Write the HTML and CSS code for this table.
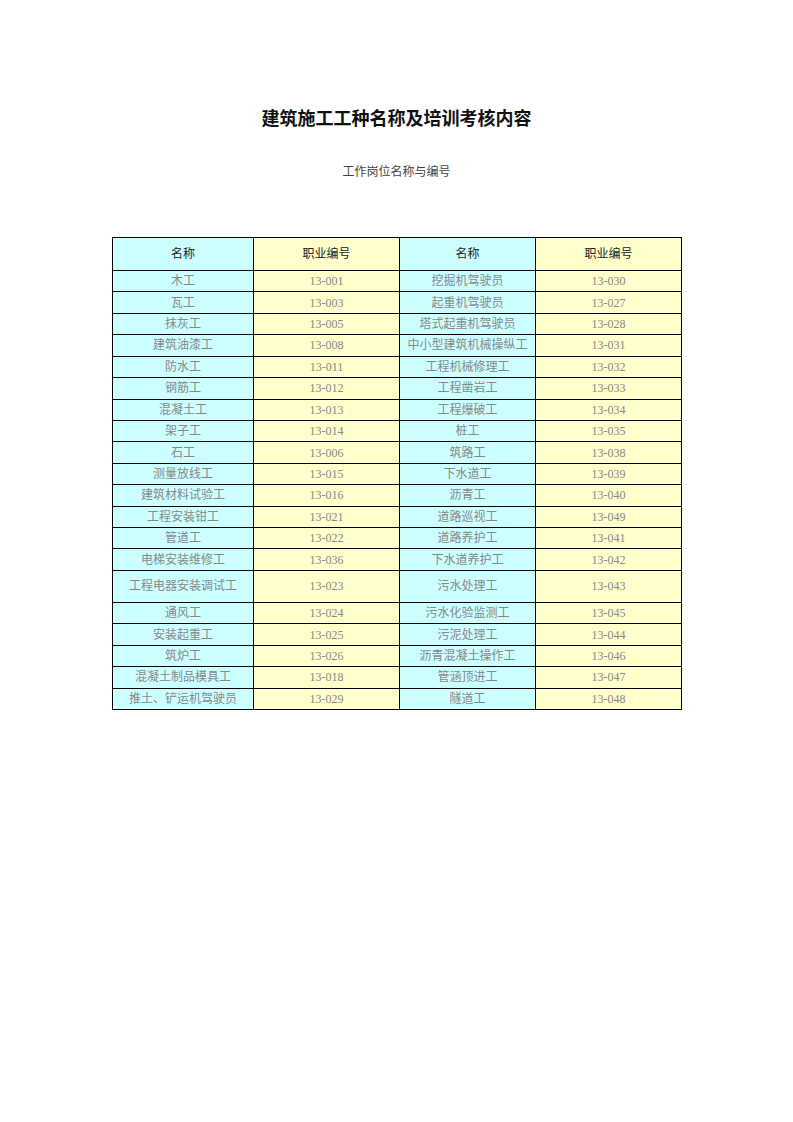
FILE: index.html
```
<!DOCTYPE html>
<html lang="zh-CN">
<head>
<meta charset="utf-8">
<title>建筑施工工种名称及培训考核内容</title>
<link rel="stylesheet" href="styles.css">
</head>
<body>
<div class="page">
  <h1 class="title">建筑施工工种名称及培训考核内容</h1>
  <p class="subtitle">工作岗位名称与编号</p>
  <table class="jobs">
    <colgroup>
      <col class="c1"><col class="c2"><col class="c3"><col class="c4">
    </colgroup>
    <thead>
      <tr class="head">
        <th class="name">名称</th><th class="code">职业编号</th><th class="name">名称</th><th class="code">职业编号</th>
      </tr>
    </thead>
    <tbody>
      <tr><td class="name">木工</td><td class="code">13-001</td><td class="name">挖掘机驾驶员</td><td class="code">13-030</td></tr>
      <tr><td class="name">瓦工</td><td class="code">13-003</td><td class="name">起重机驾驶员</td><td class="code">13-027</td></tr>
      <tr><td class="name">抹灰工</td><td class="code">13-005</td><td class="name">塔式起重机驾驶员</td><td class="code">13-028</td></tr>
      <tr><td class="name">建筑油漆工</td><td class="code">13-008</td><td class="name">中小型建筑机械操纵工</td><td class="code">13-031</td></tr>
      <tr><td class="name">防水工</td><td class="code">13-011</td><td class="name">工程机械修理工</td><td class="code">13-032</td></tr>
      <tr><td class="name">钢筋工</td><td class="code">13-012</td><td class="name">工程凿岩工</td><td class="code">13-033</td></tr>
      <tr><td class="name">混凝土工</td><td class="code">13-013</td><td class="name">工程爆破工</td><td class="code">13-034</td></tr>
      <tr><td class="name">架子工</td><td class="code">13-014</td><td class="name">桩工</td><td class="code">13-035</td></tr>
      <tr><td class="name">石工</td><td class="code">13-006</td><td class="name">筑路工</td><td class="code">13-038</td></tr>
      <tr><td class="name">测量放线工</td><td class="code">13-015</td><td class="name">下水道工</td><td class="code">13-039</td></tr>
      <tr><td class="name">建筑材料试验工</td><td class="code">13-016</td><td class="name">沥青工</td><td class="code">13-040</td></tr>
      <tr><td class="name">工程安装钳工</td><td class="code">13-021</td><td class="name">道路巡视工</td><td class="code">13-049</td></tr>
      <tr><td class="name">管道工</td><td class="code">13-022</td><td class="name">道路养护工</td><td class="code">13-041</td></tr>
      <tr><td class="name">电梯安装维修工</td><td class="code">13-036</td><td class="name">下水道养护工</td><td class="code">13-042</td></tr>
      <tr class="tall"><td class="name">工程电器安装调试工</td><td class="code">13-023</td><td class="name">污水处理工</td><td class="code">13-043</td></tr>
      <tr><td class="name">通风工</td><td class="code">13-024</td><td class="name">污水化验监测工</td><td class="code">13-045</td></tr>
      <tr><td class="name">安装起重工</td><td class="code">13-025</td><td class="name">污泥处理工</td><td class="code">13-044</td></tr>
      <tr><td class="name">筑炉工</td><td class="code">13-026</td><td class="name">沥青混凝土操作工</td><td class="code">13-046</td></tr>
      <tr><td class="name">混凝土制品模具工</td><td class="code">13-018</td><td class="name">管涵顶进工</td><td class="code">13-047</td></tr>
      <tr><td class="name">推土、铲运机驾驶员</td><td class="code">13-029</td><td class="name">隧道工</td><td class="code">13-048</td></tr>
    </tbody>
  </table>
</div>
</body>
</html>
```
FILE: styles.css
```
html, body {
  margin: 0;
  padding: 0;
  background: #ffffff;
}

.page {
  width: 793px;
  padding-top: 106px;
  font-family: "Liberation Serif", "Noto Sans CJK SC", serif;
}

.title {
  margin: 0;
  text-align: center;
  font-family: "Noto Sans CJK SC", sans-serif;
  font-size: 18px;
  font-weight: bold;
  line-height: 22px;
  color: #111111;
}

.subtitle {
  margin: 36px 0 0 0;
  text-align: center;
  font-size: 12px;
  line-height: 16px;
  color: #444444;
}

.jobs {
  margin: 57px 0 0 112px;
  border-collapse: collapse;
  table-layout: fixed;
  width: 569px;
  border: 1px solid #000000;
  font-size: 12px;
}

.c1 { width: 141px; }
.c2 { width: 146px; }
.c3 { width: 136px; }
.c4 { width: 146px; }

.jobs th,
.jobs td {
  border: 1px solid #000000;
  padding: 0;
  text-align: center;
  vertical-align: middle;
  white-space: nowrap;
  line-height: 14px;
}

.jobs th {
  font-weight: normal;
  color: #222222;
}

.jobs td {
  color: #888888;
}

.jobs .name { background: #ccffff; }
.jobs .code { background: #ffffcc; }

.jobs tr.head { height: 33px; }
.jobs tbody tr { height: 21.43px; }
.jobs tbody tr.tall { height: 32px; }
```
